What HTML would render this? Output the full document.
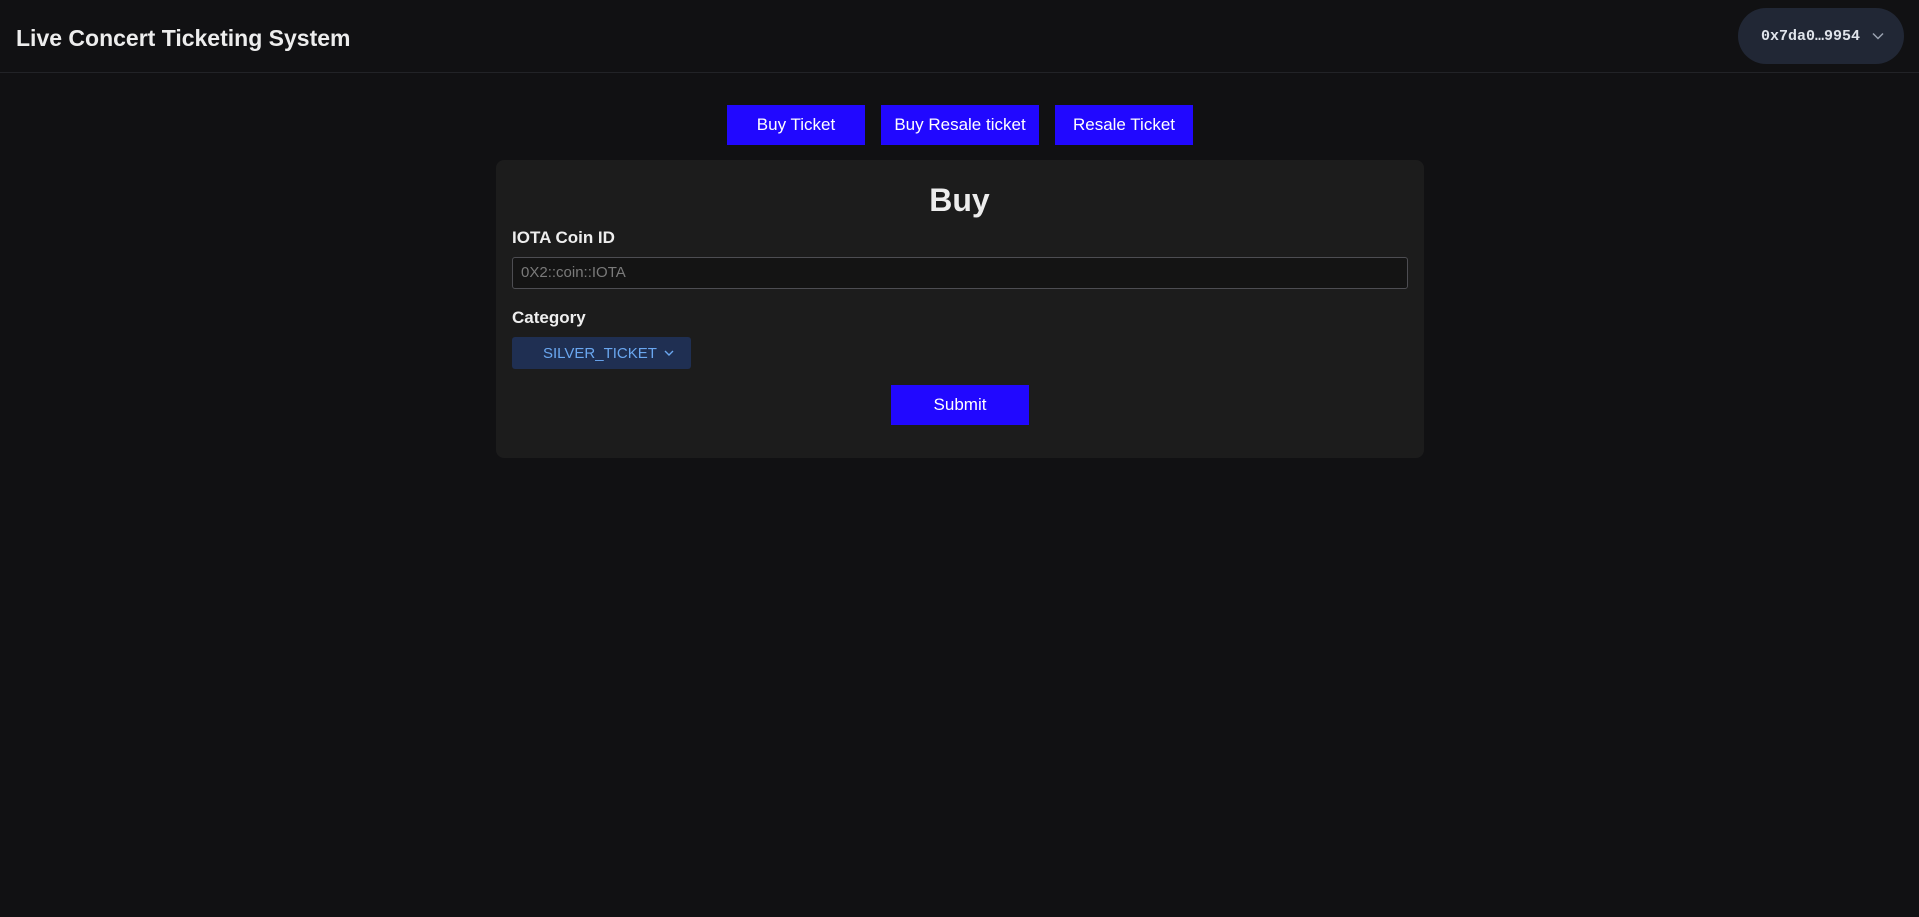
<!DOCTYPE html>
<html><head><meta charset="utf-8"><style>
*{box-sizing:border-box;margin:0;padding:0}
html,body{width:1919px;height:917px;overflow:hidden;background:#111113;font-family:"Liberation Sans",sans-serif;color:#ededed}
.hdr{position:absolute;left:0;top:0;width:1919px;height:73px;border-bottom:1px solid #222327}
.title{position:absolute;left:16px;top:25px;font-size:23px;font-weight:bold;color:#ededed}
.pill{position:absolute;left:1738px;top:8px;width:166px;height:56px;border-radius:28px;background:#212735;display:flex;align-items:center;padding-left:23px;font-family:"Liberation Mono",monospace;font-weight:bold;font-size:15px;color:#dfe3ea}
.pill svg{margin-left:12px}
.btn{position:absolute;background:#2108ff;color:#fff;font-size:17px;display:flex;align-items:center;justify-content:center}
.card{position:absolute;left:496px;top:160px;width:928px;height:298px;background:#1c1c1c;border-radius:8px}
.h{position:absolute;left:0;width:100%;top:182px;text-align:center;font-size:32px;font-weight:bold}
.lbl{position:absolute;left:512px;font-size:17px;font-weight:bold;color:#eee}
.inp{position:absolute;left:512px;top:257px;width:896px;height:32px;background:#141414;border:1px solid #4d4d52;border-radius:3px;font-size:15px;color:#7a7a7a;padding:6px 0 0 8px}
.sel{position:absolute;left:512px;top:337px;width:179px;height:32px;background:#1f2f52;border-radius:3px;color:#6aa7f0;font-size:15px;display:flex;align-items:center;padding-left:31px}
.sel svg{margin-left:7px}
</style></head><body>
<div class="hdr"><div class="title">Live Concert Ticketing System</div>
<div class="pill">0x7da0…9954<svg width="12" height="8" viewBox="0 0 12 8"><path d="M1 1.5l5 5 5-5" stroke="#9aa2b0" stroke-width="1.5" fill="none"/></svg></div></div>
<div class="btn" style="left:727px;top:105px;width:138px;height:40px">Buy Ticket</div>
<div class="btn" style="left:881px;top:105px;width:158px;height:40px">Buy Resale ticket</div>
<div class="btn" style="left:1055px;top:105px;width:138px;height:40px">Resale Ticket</div>
<div class="card"></div>
<div class="h">Buy</div>
<div class="lbl" style="top:228px">IOTA Coin ID</div>
<div class="inp">0X2::coin::IOTA</div>
<div class="lbl" style="top:308px">Category</div>
<div class="sel">SILVER_TICKET<svg width="10" height="6" viewBox="0 0 10 6"><path d="M1 1l4 4 4-4" stroke="#6aa7f0" stroke-width="1.4" fill="none"/></svg></div>
<div class="btn" style="left:891px;top:385px;width:138px;height:40px">Submit</div>
</body></html>
